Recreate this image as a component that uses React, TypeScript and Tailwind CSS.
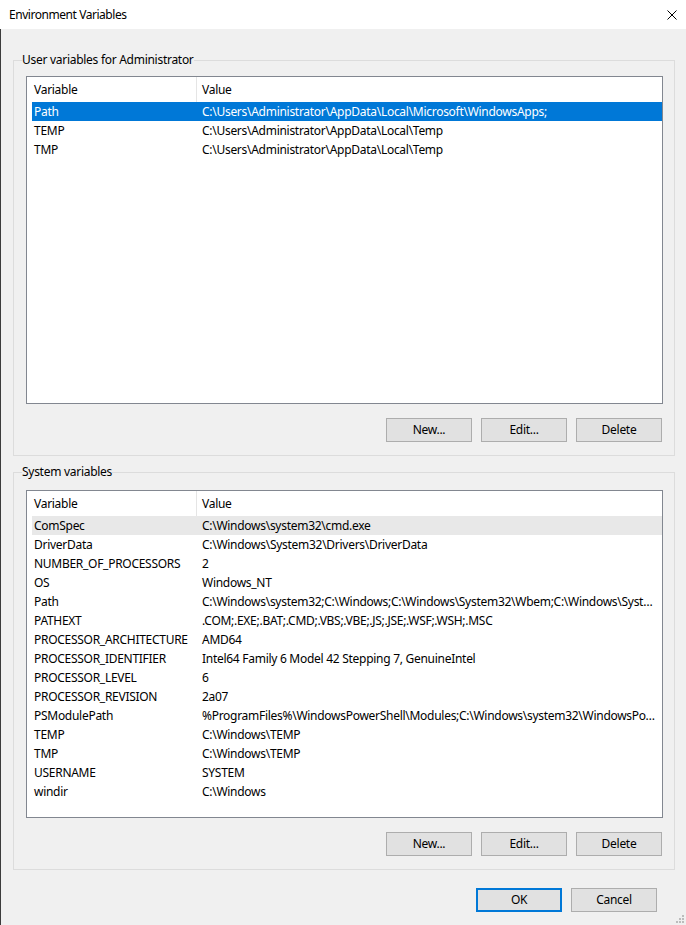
import React from "react";

type Row = { name: string; value: string };

const userRows: Row[] = [
  { name: "Path", value: "C:\\Users\\Administrator\\AppData\\Local\\Microsoft\\WindowsApps;" },
  { name: "TEMP", value: "C:\\Users\\Administrator\\AppData\\Local\\Temp" },
  { name: "TMP", value: "C:\\Users\\Administrator\\AppData\\Local\\Temp" },
];

const systemRows: Row[] = [
  { name: "ComSpec", value: "C:\\Windows\\system32\\cmd.exe" },
  { name: "DriverData", value: "C:\\Windows\\System32\\Drivers\\DriverData" },
  { name: "NUMBER_OF_PROCESSORS", value: "2" },
  { name: "OS", value: "Windows_NT" },
  {
    name: "Path",
    value:
      "C:\\Windows\\system32;C:\\Windows;C:\\Windows\\System32\\Wbem;C:\\Windows\\System32\\WindowsPowerShell\\v1.0\\;C:\\Windows\\System32\\OpenSSH\\",
  },
  { name: "PATHEXT", value: ".COM;.EXE;.BAT;.CMD;.VBS;.VBE;.JS;.JSE;.WSF;.WSH;.MSC" },
  { name: "PROCESSOR_ARCHITECTURE", value: "AMD64" },
  { name: "PROCESSOR_IDENTIFIER", value: "Intel64 Family 6 Model 42 Stepping 7, GenuineIntel" },
  { name: "PROCESSOR_LEVEL", value: "6" },
  { name: "PROCESSOR_REVISION", value: "2a07" },
  {
    name: "PSModulePath",
    value:
      "%ProgramFiles%\\WindowsPowerShell\\Modules;C:\\Windows\\system32\\WindowsPowerShell\\v1.0\\Modules",
  },
  { name: "TEMP", value: "C:\\Windows\\TEMP" },
  { name: "TMP", value: "C:\\Windows\\TEMP" },
  { name: "USERNAME", value: "SYSTEM" },
  { name: "windir", value: "C:\\Windows" },
];

function ListView({ rows, selected, hover }: { rows: Row[]; selected?: number; hover?: number }) {
  return (
    <div className="h-[328px] min-w-0 border border-[#828790] bg-white overflow-hidden">
      <div className="flex h-[25px]">
        <div className="w-[170px] shrink-0 pl-[7px] border-r border-[#e5e5e5] flex items-center">Variable</div>
        <div className="pl-[5px] flex items-center">Value</div>
      </div>
      {rows.map((row, i) => (
        <div
          key={i}
          className={
            "ml-[5px] flex h-[19px] items-center " +
            (i === selected ? "bg-[#0078d7] text-white" : i === hover ? "bg-[#e8e8e8]" : "")
          }
        >
          <div className="w-[168px] shrink-0 pl-[2px] whitespace-nowrap overflow-hidden">{row.name}</div>
          <div className="min-w-0 flex-1 pl-[2px] pr-[5px] whitespace-nowrap overflow-hidden text-ellipsis">
            {row.value}
          </div>
        </div>
      ))}
    </div>
  );
}

function Btn({ label, primary }: { label: string; primary?: boolean }) {
  return (
    <button
      className={
        "w-[86px] h-[24px] bg-[#e1e1e1] text-black flex items-center justify-center " +
        (primary ? "border-2 border-[#0078d7]" : "border border-[#adadad]")
      }
    >
      {label}
    </button>
  );
}

function Group({ title, rows, selected, hover, pt }: { title: string; rows: Row[]; selected?: number; hover?: number; pt: string }) {
  return (
    <fieldset className="min-w-0 border border-[#dcdcdc] ml-[12px] mr-[11px]">
      <legend className="ml-[8px] leading-[16px]">{title}</legend>
      <div className={"pl-[12px] pr-[11px] pb-[13px] " + pt}>
        <ListView rows={rows} selected={selected} hover={hover} />
        <div className="mt-[14px] mr-[1px] flex justify-end gap-[9px]">
          <Btn label="New..." />
          <Btn label="Edit..." />
          <Btn label="Delete" />
        </div>
      </div>
    </fieldset>
  );
}

export default function App() {
  return (
    <div className="relative w-[686px] h-[925px] overflow-hidden flex flex-col bg-[#f0f0f0] text-[12px] tracking-[-0.28px] text-black font-['Noto_Sans',sans-serif]">
      <div className="h-[29px] shrink-0 bg-white flex items-center justify-between pl-[9px] pr-[9px]">
        <span className="tracking-[-0.45px]">Environment Variables</span>
        <svg width="10" height="10" viewBox="0 0 10 10">
          <path d="M0.5 0.5 L9.5 9.5 M9.5 0.5 L0.5 9.5" stroke="#000" strokeWidth="1" fill="none" />
        </svg>
      </div>
      <div className="flex-1 min-w-0 border-l border-[#3c3c3c]">
        <div className="mt-[23px]">
          <Group title="User variables for Administrator" rows={userRows} selected={0} pt="pt-[8px]" />
        </div>
        <div className="mt-[8px]">
          <Group title="System variables" rows={systemRows} hover={0} pt="pt-[10px]" />
        </div>
        <div className="mt-[18px] mr-[29px] flex justify-end gap-[9px]">
          <Btn label="OK" primary />
          <Btn label="Cancel" />
        </div>
      </div>
      <svg width="9" height="9" viewBox="0 0 9 9" className="absolute right-[2px] bottom-[2px]">
        <rect x="7" y="1" width="2" height="2" fill="#bcbcbc" />
        <rect x="4" y="4" width="2" height="2" fill="#bcbcbc" />
        <rect x="7" y="4" width="2" height="2" fill="#bcbcbc" />
        <rect x="1" y="7" width="2" height="2" fill="#bcbcbc" />
        <rect x="4" y="7" width="2" height="2" fill="#bcbcbc" />
        <rect x="7" y="7" width="2" height="2" fill="#bcbcbc" />
      </svg>
    </div>
  );
}
